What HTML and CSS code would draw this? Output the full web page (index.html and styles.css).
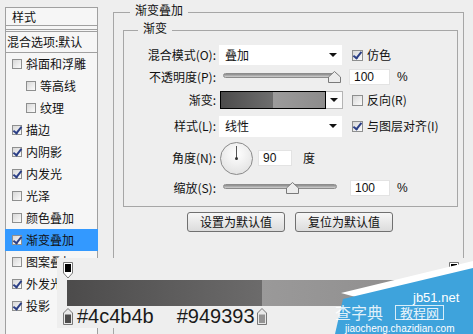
FILE: index.html
```html
<!DOCTYPE html>
<html lang="zh-CN">
<head>
  <meta charset="UTF-8">
  <title>图层样式</title>
<link rel="stylesheet" href="styles.css">
</head>
<body>
  <div class="dialog">
    <div class="sidebar">
      <div class="side-head">样式</div>
      <div class="side-blend">混合选项:默认</div>
      <ul class="fx-list">
        <li class="fx"><span class="cb"></span>斜面和浮雕</li>
        <li class="fx sub"><span class="cb"></span>等高线</li>
        <li class="fx sub"><span class="cb"></span>纹理</li>
        <li class="fx"><span class="cb on"></span>描边</li>
        <li class="fx"><span class="cb on"></span>内阴影</li>
        <li class="fx"><span class="cb on"></span>内发光</li>
        <li class="fx"><span class="cb"></span>光泽</li>
        <li class="fx"><span class="cb"></span>颜色叠加</li>
        <li class="fx active"><span class="cb on"></span>渐变叠加</li>
        <li class="fx"><span class="cb"></span>图案叠加</li>
        <li class="fx"><span class="cb on"></span>外发光</li>
        <li class="fx"><span class="cb on"></span>投影</li>
      </ul>
    </div>
    <div class="main">
      <fieldset class="group outer">
        <legend>渐变叠加</legend>
        <fieldset class="group inner">
          <legend>渐变</legend>
          <div class="row r1">
            <span class="lbl">混合模式(O):</span>
            <div class="select">叠加<span class="caret"></span></div>
            <label class="chk"><span class="cb on"></span>仿色</label>
          </div>
          <div class="row r2">
            <span class="lbl">不透明度(P):</span>
            <div class="slider"><div class="track"></div><svg class="thumb" style="left:105px" width="13" height="12" viewBox="0 0 13 12"><path d="M6.5 0.5 L12.5 6 L12.5 11.5 L0.5 11.5 L0.5 6 Z" fill="#ececec" stroke="#7a7a7a"/></svg></div>
            <div class="num">100</div>
            <span class="unit">%</span>
          </div>
          <div class="row r3">
            <span class="lbl">渐变:</span>
            <div class="grad-field">
              <div class="grad-preview"></div>
              <div class="grad-btn"><span class="caret"></span></div>
            </div>
            <label class="chk"><span class="cb"></span>反向(R)</label>
          </div>
          <div class="row r4">
            <span class="lbl">样式(L):</span>
            <div class="select">线性<span class="caret"></span></div>
            <label class="chk"><span class="cb on"></span>与图层对齐(I)</label>
          </div>
          <div class="row r5">
            <span class="lbl">角度(N):</span>
            <div class="dial"></div>
            <div class="num short">90</div>
            <span class="unit deg">度</span>
          </div>
          <div class="row r6">
            <span class="lbl">缩放(S):</span>
            <div class="slider"><div class="track"></div><svg class="thumb" style="left:63px" width="13" height="12" viewBox="0 0 13 12"><path d="M6.5 0.5 L12.5 6 L12.5 11.5 L0.5 11.5 L0.5 6 Z" fill="#ececec" stroke="#7a7a7a"/></svg></div>
            <div class="num">100</div>
            <span class="unit">%</span>
          </div>
        </fieldset>
        <div class="btns">
          <button class="btn">设置为默认值</button>
          <button class="btn">复位为默认值</button>
        </div>
      </fieldset>
    </div>
  </div>

  <div class="grad-editor">
    <div class="stops-top">
      <svg width="10" height="17" viewBox="0 0 10 17"><path d="M0.5 0.5 H9.5 V11 L5 16 L0.5 11 Z" fill="#fff" stroke="#777"/><rect x="2" y="2" width="6" height="8" fill="#000"/></svg>
      <svg width="10" height="17" viewBox="0 0 10 17"><path d="M0.5 0.5 H9.5 V11 L5 16 L0.5 11 Z" fill="#fff" stroke="#777"/><rect x="2" y="2" width="6" height="8" fill="#000"/></svg>
    </div>
    <div class="bar"></div>
    <div class="stops-bottom">
      <svg class="stop" width="10" height="17" viewBox="0 0 10 17"><path d="M5 0.5 L9.5 5 V16.5 H0.5 V5 Z" fill="#e8e8e8" stroke="#777"/><rect x="2" y="6.5" width="6" height="8.5" fill="#4c4b4b"/></svg>
      <span class="hex">#4c4b4b</span>
      <span class="hex second">#949393</span>
      <svg class="stop right" width="10" height="17" viewBox="0 0 10 17"><path d="M5 0.5 L9.5 5 V16.5 H0.5 V5 Z" fill="#e8e8e8" stroke="#777"/><rect x="2" y="6.5" width="6" height="8.5" fill="#949393"/></svg>
    </div>
  </div>

  <div class="watermark">
    <svg width="140" height="75" viewBox="0 0 140 75">
      <polygon points="8,34 140,2 140,10 30,40" fill="#ffffff"/>
      <polygon points="2,75 10,40 140,9 140,75" fill="#3ea3dc"/>
    </svg>
    <span class="wm-site">jb51.net</span>
    <span class="wm-name">查字典</span>
    <span class="wm-box">教程网</span>
    <span class="wm-url">jiaocheng.chazidian.com</span>
  </div>
</body>
</html>
```

FILE: styles.css
```css
*{box-sizing:border-box;}
body{margin:0;width:473px;height:334px;overflow:hidden;position:relative;background:#eeeeee;color:#111;font:12px/14px "Noto Sans CJK SC","Liberation Sans",sans-serif;}

.dialog{display:flex;align-items:flex-start;}

/* left list */
.sidebar{margin:7px 0 0 5px;width:93px;height:340px;border:1px solid #a0a0a0;border-bottom:none;background:#f6f6f6;}
.side-head{height:18px;line-height:17px;padding-left:6px;border-bottom:1px solid #a0a0a0;}
.side-blend{margin-top:3px;height:24px;line-height:20px;padding-left:1px;border-top:3px double #a0a0a0;border-bottom:1px solid #a0a0a0;white-space:nowrap;}
.fx-list{list-style:none;margin:0;padding:0;}
.fx{display:flex;align-items:center;gap:4px;height:22px;padding-left:6px;white-space:nowrap;}
.fx.sub{padding-left:20px;}
.fx.active{margin:0 -1px;padding-left:7px;background:#3399ff;}

.cb{position:relative;flex:none;width:10px;height:10px;border:1px solid #8e8f8f;background:linear-gradient(135deg,#d8d8d8,#fbfbfb);}
.cb.on::after{content:"";position:absolute;left:2px;top:-1px;width:3px;height:7px;border:solid #2b3f86;border-width:0 2px 2px 0;transform:rotate(38deg);}

/* right side */
.main{margin-left:15px;}
.group{margin:0;padding:0;min-width:0;border:1px solid #a6a6a6;}
.group legend{padding:0 5px 4px;font-size:12px;line-height:14px;}
.outer{margin-top:3px;width:351px;height:340px;padding:0 0 0 9px;border-bottom:none;}
.outer > legend{margin-left:7px;}
.inner{width:335px;padding:5px 0 6px 0;}
.inner > legend{margin-left:14px;}

.row{display:flex;align-items:center;}
.r1,.r2{height:22px;}
.r3{height:24px;}
.r4{height:28px;}
.r5{height:36px;}
.r6{height:24px;}
.lbl{flex:none;width:93px;padding-right:1px;text-align:right;white-space:nowrap;}

.select{display:flex;align-items:center;width:123px;height:20px;margin-left:2px;padding-left:6px;background:#fff;}
.r4 .select{height:21px;}
.caret{width:0;height:0;margin-left:auto;margin-right:5px;border-left:4px solid transparent;border-right:4px solid transparent;border-top:4px solid #111;}

.chk{display:flex;align-items:center;gap:4px;margin-left:10px;white-space:nowrap;}
.chk .cb{width:11px;height:11px;}
.r3 .chk{margin-left:9px;}

.slider{position:relative;width:114px;height:12px;margin-left:6px;}
.track{margin-top:2px;height:5px;border:1px solid #8c8c8c;border-radius:3px;background:linear-gradient(#8a8a8a,#d0d0d0);}
.thumb{position:absolute;top:0;}

.num{width:41px;height:16px;margin-left:12px;padding-left:4px;line-height:15px;background:#fff;border:1px solid #e3e3e3;font-family:"Liberation Sans",sans-serif;}
.r6 .num{width:40px;margin-left:13px;}
.num.short{width:34px;margin-left:5px;}
.unit{margin-left:7px;font-family:"Liberation Sans",sans-serif;}
.unit.deg{margin-left:11px;font-family:"Noto Sans CJK SC",sans-serif;}

.grad-field{display:flex;margin-left:3px;}
.grad-preview{width:106px;height:18px;border:1px solid #000;background:linear-gradient(to right,#4c4b4b 0%,#6e6e6e 50%,#9c9b9b 50%,#8d8c8c 100%);}
.grad-btn{display:flex;align-items:center;width:17px;height:18px;border:1px solid #b4b4b4;border-left:none;background:#fbfbfb;}
.grad-btn .caret{margin:0 auto;}

.dial{position:relative;width:33px;height:33px;margin-left:3px;border:1px solid #8a8a8a;border-radius:50%;background:radial-gradient(circle at 50% 35%,#ffffff,#dcdcdc);}
.dial::before{content:"";position:absolute;left:15px;top:3px;width:1px;height:13px;background:#555;}
.dial::after{content:"";position:absolute;left:14px;top:14px;width:3px;height:3px;border-radius:50%;background:#333;}

.btns{display:flex;gap:10px;margin-top:5px;padding-left:64px;}
.btn{width:98px;height:20px;padding:0;border:1px solid #707070;border-radius:3px;background:linear-gradient(#f7f7f7,#dcdcdc);color:#111;font:12px/16px "Noto Sans CJK SC",sans-serif;}

/* gradient editor shown over the dialog */
.grad-editor{position:absolute;left:57px;top:258px;width:413px;height:70px;background:#eeeeee;}
.stops-top{display:flex;justify-content:space-between;height:22px;padding:4px 11px 0 6px;}
.bar{width:390px;height:26px;margin-left:10px;background:linear-gradient(to right,#4c4b4b 0%,#6c6b6b 50%,#9a9999 50%,#8c8b8b 100%);}
.stops-bottom{display:flex;align-items:center;height:17px;margin-top:2px;padding-left:6px;}
.hex{margin-left:4px;font:20px/17px "Liberation Sans",Arial,sans-serif;color:#1a1a1a;}
.hex.second{margin-left:23px;}
.stop.right{margin-left:2px;}

/* site watermark */
.watermark{position:absolute;right:0;bottom:0;width:140px;height:75px;}
.watermark svg{display:block;}
.wm-site{position:absolute;left:80px;top:33px;color:#fff;font:13px/12px "Liberation Sans",sans-serif;}
.wm-name{position:absolute;left:2px;top:46px;color:rgba(255,255,255,0.85);font:16px/15px "Noto Sans CJK SC",sans-serif;}
.wm-box{position:absolute;left:62px;top:46px;padding:0 4px;border:1px solid rgba(255,255,255,0.8);color:rgba(255,255,255,0.9);font:13px/13px "Noto Sans CJK SC",sans-serif;}
.wm-url{position:absolute;left:12px;top:65px;color:#fff;font:10px/10px "Liberation Sans",sans-serif;}
```
